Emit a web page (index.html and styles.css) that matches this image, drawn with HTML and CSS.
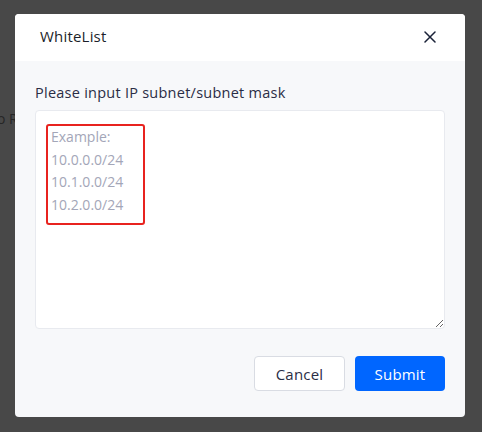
FILE: index.html
```html
<!DOCTYPE html>
<html lang="en">
<head>
<meta charset="utf-8">
<link rel="stylesheet" href="styles.css">
</head>
<body>
<div class="backdrop-text">o R</div>
<div class="dialog">
  <div class="dialog-header">
    <span class="dialog-title">WhiteList</span>
    <svg class="close-icon" width="12" height="12" viewBox="0 0 12 12"><path d="M1 1L11 11M11 1L1 11" stroke="#1a2238" stroke-width="1.5" stroke-linecap="round"/></svg>
  </div>
  <div class="dialog-body">
    <div class="field-label">Please input IP subnet/subnet mask</div>
    <div class="textarea-wrap">
      <textarea class="ip-input" placeholder="Example:&#10;10.0.0.0/24&#10;10.1.0.0/24&#10;10.2.0.0/24"></textarea>
      <div class="annotation"></div>
    </div>
    <div class="actions">
      <button class="btn btn-cancel">Cancel</button>
      <button class="btn btn-submit">Submit</button>
    </div>
  </div>
</div>
</body>
</html>
```
FILE: styles.css
```css
html, body {
  margin: 0;
  padding: 0;
}
body {
  width: 482px;
  height: 432px;
  background: #484848;
  font-family: "Open Sans", "DejaVu Sans", sans-serif;
  position: relative;
  overflow: hidden;
}
.backdrop-text {
  position: absolute;
  left: -3px;
  top: 109px;
  font-size: 14px;
  color: #262626;
}
.dialog {
  position: relative;
  margin: 14px 0 0 15px;
  width: 450px;
  height: 403px;
  border-radius: 4px;
  overflow: hidden;
  background: #f7f8fa;
  display: flex;
  flex-direction: column;
}
.dialog-header {
  height: 47px;
  background: #fff;
  display: flex;
  align-items: center;
  justify-content: space-between;
  padding: 0 29px 0 25px;
  flex-shrink: 0;
}
.dialog-title {
  font-size: 15px;
  color: #1c1f2a;
  margin-top: -4px;
  letter-spacing: 0.2px;
}
.close-icon {
  display: block;
  margin-top: -1px;
}
.dialog-body {
  padding: 22px 20px 0 20px;
  display: flex;
  flex-direction: column;
}
.field-label {
  font-size: 14.5px;
  line-height: 20px;
  color: #2a2d45;
  margin-bottom: 7px;
  letter-spacing: 0.25px;
}
.textarea-wrap {
  position: relative;
  width: 410px;
  height: 219px;
}
.ip-input {
  box-sizing: border-box;
  width: 410px;
  height: 219px;
  margin: 0;
  border: 1px solid #e8eaef;
  border-radius: 4px;
  background: #fff;
  padding: 15px 15px;
  font-family: inherit;
  font-size: 14px;
  line-height: 22.5px;
  color: #333;
  outline: none;
  display: block;
}
.ip-input::placeholder {
  color: #a3a6b8;
}
.annotation {
  position: absolute;
  left: 11px;
  top: 14px;
  width: 95px;
  height: 97px;
  border: 2px solid #e8231f;
  border-radius: 3px;
  pointer-events: none;
}
.actions {
  display: flex;
  justify-content: flex-end;
  gap: 10px;
  margin-top: 27px;
}
.btn {
  height: 35px;
  border-radius: 4px;
  font-family: inherit;
  font-size: 15px;
  padding: 0;
  cursor: pointer;
  letter-spacing: 0.2px;
}
.btn-cancel {
  width: 91px;
  background: #fff;
  border: 1px solid #d9dce3;
  color: #2a2d45;
}
.btn-submit {
  width: 90px;
  background: #0066ff;
  border: none;
  color: #fff;
  font-weight: 500;
}
```
